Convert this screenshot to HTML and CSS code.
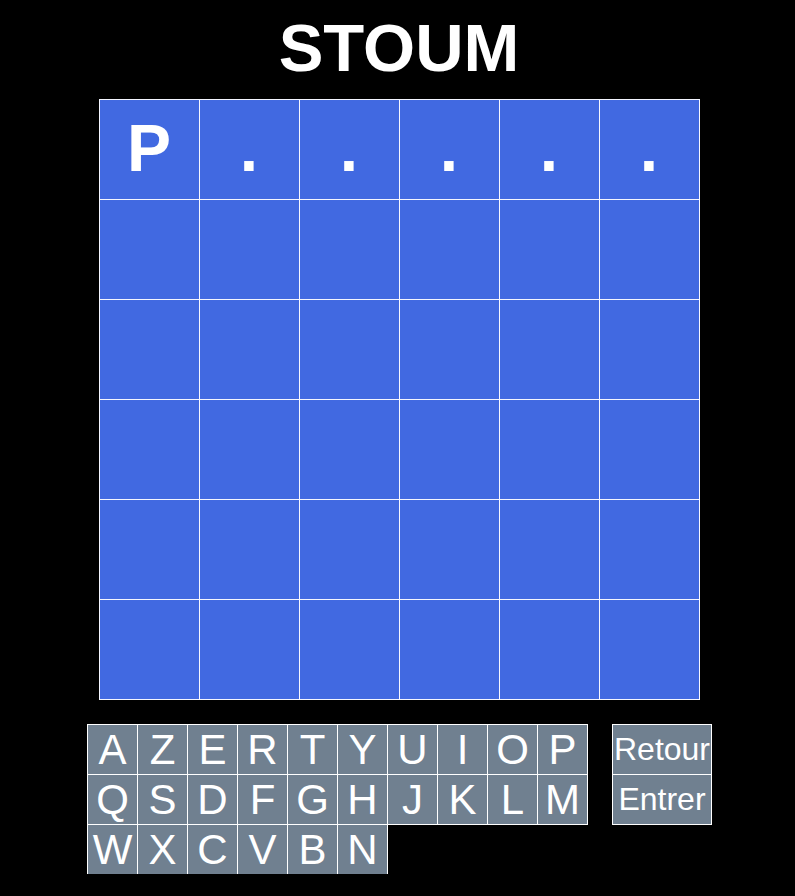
FILE: index.html
```html
<!DOCTYPE html>
<html lang="fr">
<head>
<meta charset="utf-8">
<title>STOUM</title>
<link rel="stylesheet" href="styles.css">
</head>
<body>
<div class="page">
  <div class="title">STOUM</div>
  <div class="board">
    <div class="cell">P</div><div class="cell">.</div><div class="cell">.</div><div class="cell">.</div><div class="cell">.</div><div class="cell">.</div>
    <div class="cell"></div><div class="cell"></div><div class="cell"></div><div class="cell"></div><div class="cell"></div><div class="cell"></div>
    <div class="cell"></div><div class="cell"></div><div class="cell"></div><div class="cell"></div><div class="cell"></div><div class="cell"></div>
    <div class="cell"></div><div class="cell"></div><div class="cell"></div><div class="cell"></div><div class="cell"></div><div class="cell"></div>
    <div class="cell"></div><div class="cell"></div><div class="cell"></div><div class="cell"></div><div class="cell"></div><div class="cell"></div>
    <div class="cell"></div><div class="cell"></div><div class="cell"></div><div class="cell"></div><div class="cell"></div><div class="cell"></div>
  </div>
  <div class="keyboard">
    <div class="letters">
      <div class="row">
        <div class="key">A</div><div class="key">Z</div><div class="key">E</div><div class="key">R</div><div class="key">T</div><div class="key">Y</div><div class="key">U</div><div class="key">I</div><div class="key">O</div><div class="key">P</div>
      </div>
      <div class="row">
        <div class="key">Q</div><div class="key">S</div><div class="key">D</div><div class="key">F</div><div class="key">G</div><div class="key">H</div><div class="key">J</div><div class="key">K</div><div class="key">L</div><div class="key">M</div>
      </div>
      <div class="row">
        <div class="key">W</div><div class="key">X</div><div class="key">C</div><div class="key">V</div><div class="key">B</div><div class="key">N</div>
      </div>
    </div>
    <div class="actions">
      <div class="action">Retour</div>
      <div class="action">Entrer</div>
    </div>
  </div>
</div>
</body>
</html>
```

FILE: styles.css
```css
html, body {
  margin: 0;
  padding: 0;
  background: #000;
}

body {
  font-family: "Liberation Sans", Arial, sans-serif;
  color: #fff;
  padding-left: 3px;
}

.page {
  display: flex;
  flex-direction: column;
  align-items: center;
}

.title {
  height: 99px;
  line-height: 96px;
  font-size: 67px;
  font-weight: bold;
  text-align: center;
}

.board {
  display: grid;
  grid-template-columns: repeat(6, 99px);
  grid-auto-rows: 99px;
  gap: 1px;
  padding: 1px;
  background: #f4f6ff;
}

.cell {
  background: #4169e1;
  font-size: 66px;
  font-weight: bold;
  line-height: 97px;
  text-align: center;
}

.keyboard {
  display: flex;
  align-items: flex-start;
  gap: 25px;
  margin-top: 24px;
  margin-left: 1px;
}

.row {
  display: flex;
}

.key {
  width: 49px;
  height: 49px;
  border: 1px solid #fff;
  margin-right: -1px;
  margin-bottom: -1px;
  background: #708090;
  font-size: 42px;
  line-height: 50px;
  text-align: center;
}

.actions {
  display: flex;
  flex-direction: column;
}

.action {
  width: 98px;
  height: 49px;
  border: 1px solid #fff;
  margin-bottom: -1px;
  background: #708090;
  font-size: 32px;
  line-height: 49px;
  text-align: center;
  white-space: nowrap;
  overflow: visible;
}
```
